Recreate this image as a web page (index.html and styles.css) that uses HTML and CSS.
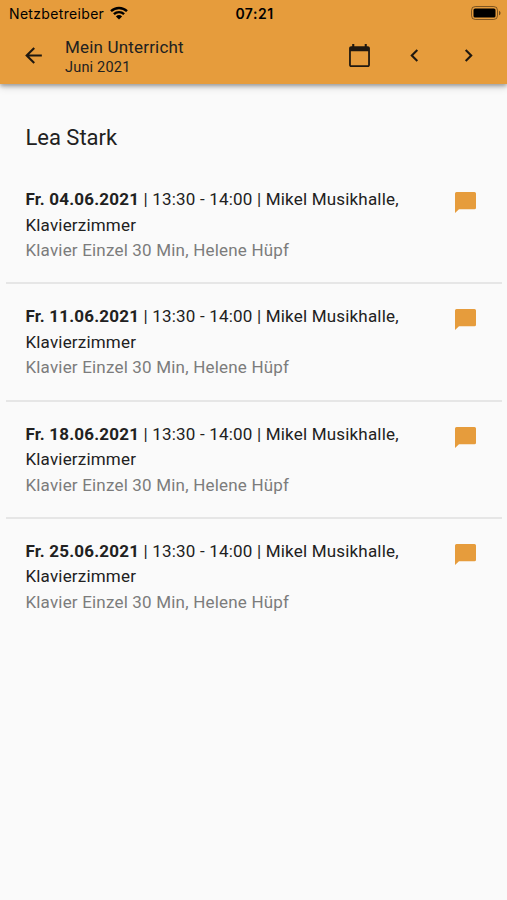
FILE: index.html
```html
<!DOCTYPE html>
<html lang="de">
  <head>
    <meta charset="utf-8">
    <meta name="viewport" content="width=device-width, initial-scale=1.0">
    <title>Mein Unterricht</title>
    <link rel="stylesheet" href="styles.css">
  </head>
  <body>
    <header class="appbar">
      <div class="status">
        <div class="carrier">
          <span>Netzbetreiber</span>
          <svg class="wifi" viewBox="0 0 18 14"><path d="M1 5.2a11.6 11.6 0 0 1 16 0M3.9 8.2a7.4 7.4 0 0 1 10.2 0" fill="none" stroke="#000" stroke-width="2.4"/><path d="M9 13.6L5.9 10.4a4.5 4.5 0 0 1 6.2 0z"/></svg>
        </div>
        <span class="clock">07:21</span>
        <svg class="battery" viewBox="0 0 30 14"><rect x=".5" y=".5" width="26" height="13" rx="3.8" fill="none" stroke="#000" stroke-opacity=".45"/><rect x="2.5" y="2.5" width="22" height="9" rx="1.6"/><path d="M28 4.7c2 .8 2 3.8 0 4.6z" fill-opacity=".5"/></svg>
      </div>
      <div class="toolbar">
        <svg class="icon" viewBox="0 0 24 24"><path d="M20 11H7.83l5.59-5.59L12 4l-8 8 8 8 1.41-1.41L7.83 13H20v-2z"/></svg>
        <div class="titles">
          <div class="title">Mein Unterricht</div>
          <div class="month">Juni 2021</div>
        </div>
        <div class="actions">
          <svg class="icon cal" viewBox="0 0 24 24"><path d="M20 3h-1V1h-2v2H7V1H5v2H4c-1.1 0-2 .9-2 2v16c0 1.1.9 2 2 2h16c1.1 0 2-.9 2-2V5c0-1.1-.9-2-2-2zm.3 18.3H3.7V8h16.6v13.3z"/></svg>
          <svg class="icon" viewBox="0 0 24 24"><path d="M15.41 7.41L14 6l-6 6 6 6 1.41-1.41L10.83 12z"/></svg>
          <svg class="icon" viewBox="0 0 24 24"><path d="M10 6L8.59 7.41 13.17 12l-4.58 4.59L10 18l6-6z"/></svg>
        </div>
      </div>
    </header>
    <main>
      <h1>Lea Stark</h1>
      <ul class="lessons">
        <li>
          <div class="text"><b>Fr. 04.06.2021</b> | 13:30 - 14:00 | Mikel Musikhalle,<br>Klavierzimmer<div class="info">Klavier Einzel 30 Min, Helene Hüpf</div></div>
          <svg class="note" viewBox="0 0 22 22"><path d="M1.5 0h18a1.5 1.5 0 0 1 1.5 1.5v14.2a1.5 1.5 0 0 1-1.5 1.5H4L0 21V1.500A1.500 1.500 0 0 1 1.500 0z"/></svg>
        </li>
        <li>
          <div class="text"><b>Fr. 11.06.2021</b> | 13:30 - 14:00 | Mikel Musikhalle,<br>Klavierzimmer<div class="info">Klavier Einzel 30 Min, Helene Hüpf</div></div>
          <svg class="note" viewBox="0 0 22 22"><path d="M1.5 0h18a1.5 1.5 0 0 1 1.5 1.5v14.2a1.5 1.5 0 0 1-1.5 1.5H4L0 21V1.500A1.500 1.500 0 0 1 1.500 0z"/></svg>
        </li>
        <li>
          <div class="text"><b>Fr. 18.06.2021</b> | 13:30 - 14:00 | Mikel Musikhalle,<br>Klavierzimmer<div class="info">Klavier Einzel 30 Min, Helene Hüpf</div></div>
          <svg class="note" viewBox="0 0 22 22"><path d="M1.5 0h18a1.5 1.5 0 0 1 1.5 1.5v14.2a1.5 1.5 0 0 1-1.5 1.5H4L0 21V1.500A1.500 1.500 0 0 1 1.500 0z"/></svg>
        </li>
        <li>
          <div class="text"><b>Fr. 25.06.2021</b> | 13:30 - 14:00 | Mikel Musikhalle,<br>Klavierzimmer<div class="info">Klavier Einzel 30 Min, Helene Hüpf</div></div>
          <svg class="note" viewBox="0 0 22 22"><path d="M1.5 0h18a1.5 1.5 0 0 1 1.5 1.5v14.2a1.5 1.5 0 0 1-1.5 1.5H4L0 21V1.500A1.500 1.500 0 0 1 1.500 0z"/></svg>
        </li>
      </ul>
    </main>
  </body>
</html>
```
FILE: styles.css
```css
body{margin:0; min-height:900px; background:#fafafa; color:#212121; font-family:Roboto, sans-serif;}
svg{display:block; flex:none;}
.appbar{height:84px; background:#e69c3c; box-shadow:0 2px 4px rgba(0,0,0,.3), 0 3px 8px rgba(0,0,0,.15);}
.status{display:grid; grid-template-columns:1fr auto 1fr; align-items:center; height:26px; padding:0 6px 0 9px; color:#000; font-family:Inter, sans-serif;}
.carrier{display:flex; align-items:center; gap:6px; font-size:14px; letter-spacing:.33px;}
.wifi{width:18px; height:14px;}
.clock{margin-right:1px; font-size:14px; font-weight:600; letter-spacing:.5px;}
.battery{width:30px; height:14px; justify-self:end;}
.toolbar{display:flex; align-items:center; height:58px; padding:0 26px 0 20.5px;}
.icon{width:25px; height:25px; fill:#1f1810;}
.titles{margin-left:19.5px; padding-top:4px;}
.title{font-size:17px; line-height:20px; letter-spacing:.18px;}
.month{font-size:14.5px; line-height:21px; letter-spacing:.2px;}
.actions{display:flex; align-items:center; gap:29px; margin-left:auto;}
.cal{margin-right:1px;}
h1{margin:0; padding:38px 25.4px 0; font-size:22px; line-height:32px; font-weight:400;}
.lessons{margin:0 5px 0 6px; padding:13px 0 0; list-style:none;}
.lessons li{box-sizing:border-box; display:flex; justify-content:space-between; height:117.3px; padding:20px 25px 0 19.4px; font-size:17px; line-height:25.6px; letter-spacing:.19px;}
.lessons li:not(:last-child){border-bottom:2px solid #e6e6e6;}
.info{color:#7c7c7c;}
.note{width:22px; height:22px; margin-top:5px; fill:#e69c3c;}
```
